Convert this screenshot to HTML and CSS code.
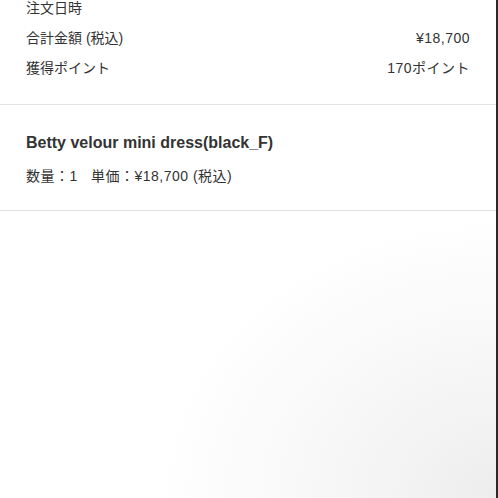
FILE: index.html
```html
<!DOCTYPE html>
<html lang="ja">
<head>
<meta charset="utf-8">
<link rel="stylesheet" href="styles.css">
</head>
<body>
<div class="page">
  <section class="summary">
    <div class="row"><span>注文日時</span><span class="value"></span></div>
    <div class="row"><span>合計金額 (税込)</span><span class="value">¥18,700</span></div>
    <div class="row"><span>獲得ポイント</span><span class="value">170ポイント</span></div>
  </section>
  <section class="item">
    <div class="item-name">Betty velour mini dress(black_F)</div>
    <div class="item-detail">数量：1&nbsp;&nbsp;&nbsp;単価：¥18,700 (税込)</div>
  </section>
</div>
</body>
</html>
```

FILE: styles.css
```css
html, body {
  margin: 0;
  padding: 0;
  height: 100%;
}
body {
  font-family: "Liberation Sans", "Noto Sans CJK JP", sans-serif;
  color: #333;
  background: radial-gradient(ellipse 340px 280px at 100% 100%, #ededed 0%, #f6f6f6 45%, #fff 100%);
  border-right: 2px solid #2a2a2a;
  box-sizing: border-box;
  overflow: hidden;
}
.page {
  display: flex;
  flex-direction: column;
}
.summary {
  display: flex;
  flex-direction: column;
  gap: 12px;
  padding: 0 26px 27px 26px;
  margin-top: -1px;
  border-bottom: 1px solid #e2e2e2;
}
.row {
  display: flex;
  justify-content: space-between;
  font-size: 14px;
  line-height: 18px;
}
.value {
  letter-spacing: 0.5px;
}
.item {
  display: flex;
  flex-direction: column;
  gap: 14px;
  padding: 28px 26px 25px 26px;
  border-bottom: 1px solid #e2e2e2;
}
.item-name {
  font-weight: bold;
  font-size: 16px;
  line-height: 20px;
}
.item-detail {
  font-size: 14px;
  line-height: 18px;
  letter-spacing: 0.5px;
}
```
